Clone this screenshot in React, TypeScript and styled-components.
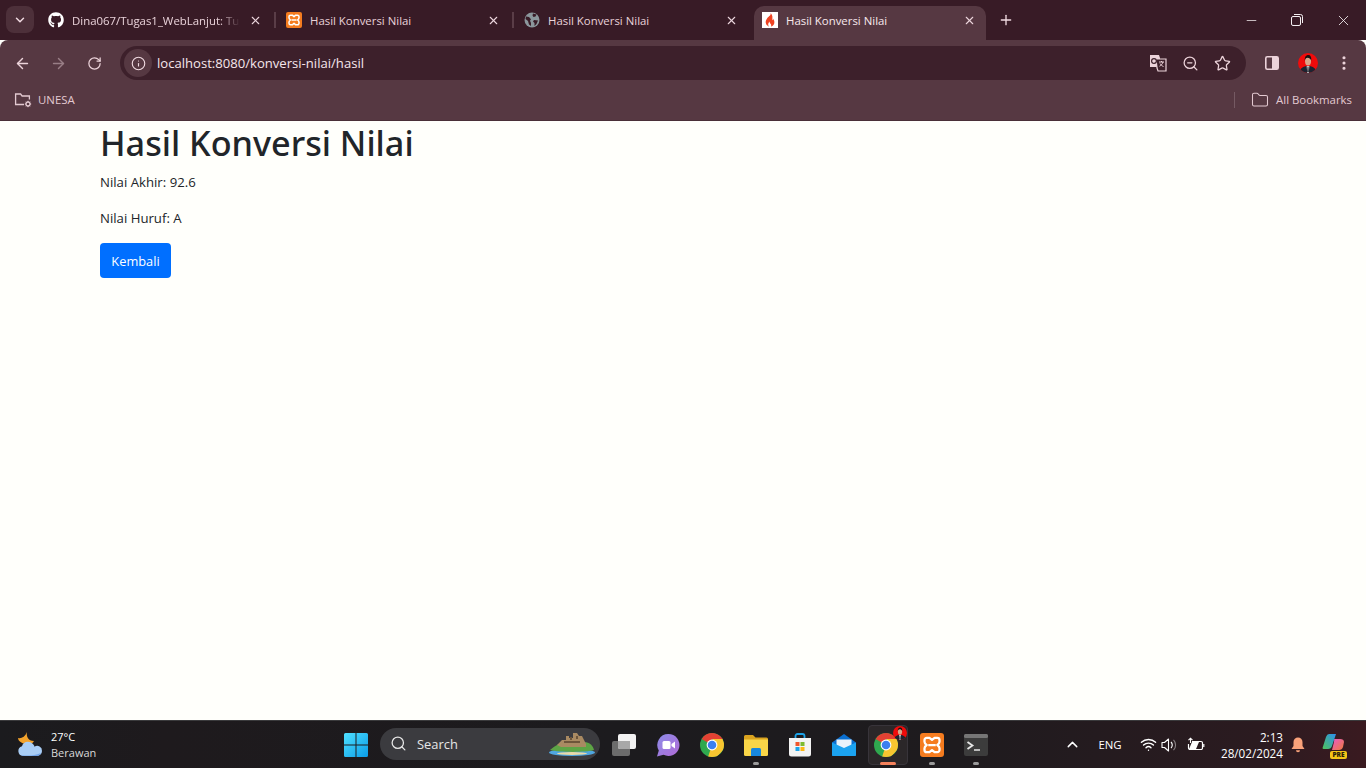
import React from "react";
import styled, { createGlobalStyle } from "styled-components";
import {
  ArrowLeft,
  ArrowRight,
  ChevronDown,
  ChevronUp,
  Folder,
  Info,
  Minus,
  MoreVertical,
  Plus,
  RotateCw,
  Search,
  Star,
  Wifi,
  X,
  ZoomOut,
} from "lucide-react";
import { FaGithub } from "react-icons/fa";

const UI_FONT = `"Open Sans", "Noto Sans", "Liberation Sans", sans-serif`;

const GlobalStyle = createGlobalStyle`
  html, body {
    margin: 0;
    padding: 0;
    height: 100%;
    overflow: hidden;
  }
  * {
    box-sizing: border-box;
  }
`;

const Screen = styled.div`
  display: flex;
  flex-direction: column;
  width: 1366px;
  height: 768px;
  overflow: hidden;
  font-family: ${UI_FONT};
  background: #fffffb;
`;

/* browser chrome */
const TabStrip = styled.div`
  display: flex;
  align-items: flex-start;
  height: 40px;
  padding-left: 6px;
  background: #381b26;
`;

const TabSearch = styled.button`
  display: flex;
  align-items: center;
  justify-content: center;
  width: 28px;
  height: 27px;
  margin: 6px 2px 0 0;
  padding: 0;
  color: #f1dbe2;
  background: #4d303a;
  border: 0;
  border-radius: 8px;
`;

const Tab = styled.div<{ $active?: boolean; $divider?: boolean }>`
  position: relative;
  display: flex;
  align-items: center;
  flex: none;
  width: ${({ $active }) => ($active ? "232px" : "238px")};
  height: 34px;
  margin: 6px ${({ $active }) => ($active ? "2px" : "0")} 0 ${({ $active }) => ($active ? "4px" : "0")};
  padding: 0 ${({ $active }) => ($active ? "8px" : "10px")} 6px ${({ $active }) => ($active ? "8px" : "12px")};
  color: ${({ $active }) => ($active ? "#f8e8ed" : "#e9d2d9")};
  background: ${({ $active }) => ($active ? "#563842" : "transparent")};
  border-radius: 10px 10px 0 0;

  &::after {
    content: "";
    display: ${({ $divider }) => ($divider ? "block" : "none")};
    position: absolute;
    top: 6px;
    right: -2px;
    width: 2px;
    height: 16px;
    background: #5a3d47;
  }
`;

const TabTitle = styled.span<{ $fade?: boolean }>`
  flex: 1;
  min-width: 0;
  margin-left: 8px;
  overflow: hidden;
  font-size: 11.4px;
  line-height: 15px;
  white-space: nowrap;
  mask-image: ${({ $fade }) =>
    $fade ? "linear-gradient(90deg, #000 88%, transparent 100%)" : "none"};
`;

const TabClose = styled.span`
  display: flex;
  flex: none;
  align-items: center;
  justify-content: center;
  width: 18px;
  margin-left: 6px;
  color: #ecd6dd;
`;

const NewTab = styled.span`
  display: flex;
  align-items: center;
  justify-content: center;
  width: 28px;
  height: 28px;
  margin: 6px 0 0 4px;
  color: #f1dbe2;
`;

const WindowControls = styled.div`
  display: flex;
  margin-left: auto;
  color: #f5f0f2;
`;

const WindowButton = styled.span`
  display: flex;
  align-items: center;
  justify-content: center;
  width: 46px;
  height: 40px;
`;

const Toolbar = styled.div`
  display: flex;
  align-items: center;
  height: 46px;
  padding-left: 4px;
  color: #ecd3da;
  background: #563842;
  border-radius: 8px 8px 0 0;
`;

const NavButton = styled.span<{ $dim?: boolean }>`
  display: flex;
  flex: none;
  align-items: center;
  justify-content: center;
  width: 36px;
  height: 34px;
  opacity: ${({ $dim }) => ($dim ? 0.45 : 1)};
`;

const Omnibox = styled.div`
  display: flex;
  align-items: center;
  width: 1126px;
  height: 34px;
  margin-left: 8px;
  padding: 0 8px 0 4px;
  background: #3d202b;
  border-radius: 17px;
`;

const SiteInfo = styled.span`
  display: flex;
  flex: none;
  align-items: center;
  justify-content: center;
  width: 28px;
  height: 28px;
  color: #f1dbe2;
  background: #563842;
  border-radius: 50%;
`;

const Url = styled.span`
  flex: 1;
  margin-left: 5px;
  color: #f6e6eb;
  font-size: 13.1px;
  line-height: 18px;
`;

const OmniAction = styled.span`
  display: flex;
  flex: none;
  align-items: center;
  justify-content: center;
  width: 32px;
`;

const ToolbarEnd = styled.div`
  display: flex;
  align-items: center;
  margin-left: 8px;
`;

const BookmarkBar = styled.div`
  display: flex;
  align-items: center;
  height: 35px;
  padding: 0 14px 7px 14px;
  color: #e3c9d1;
  background: #563842;
  border-bottom: 1px solid #4a2f38;
`;

const BookmarkLabel = styled.span`
  margin-left: 6px;
  font-size: 11.4px;
  line-height: 15px;
`;

const BookmarkDivider = styled.span`
  width: 1px;
  height: 16px;
  margin: 0 16px 0 auto;
  background: #755a63;
`;

const AllBookmarks = styled.span`
  display: flex;
  align-items: center;
  gap: 1px;
`;

/* page */
const Page = styled.main`
  flex: 1;
  padding: 0 100px;
  color: #212529;
  background: #fffffb;
`;

const Heading = styled.h1`
  margin: 0 0 7.2px;
  font-family: "Noto Sans", ${UI_FONT};
  font-size: 34.2px;
  font-weight: 500;
  line-height: 43.2px;
`;

const Line = styled.p`
  height: 21.6px;
  margin: 0 0 14.4px;
  padding-top: 1px;
  font-size: 13.2px;
  line-height: 21.6px;
`;

const BackButton = styled.a`
  display: inline-block;
  width: 71px;
  height: 35px;
  padding-top: 1px;
  color: #fff;
  font-size: 12.8px;
  line-height: 35px;
  text-align: center;
  background: #006fff;
  border-radius: 4px;
`;

/* taskbar */
const Taskbar = styled.footer`
  display: flex;
  align-items: center;
  height: 48px;
  color: #fff;
  background: linear-gradient(90deg, #1b1b1e 0%, #1e1a1d 12%, #1c1b1e 45%, #1e1b1e 70%, #2b1b20 92%, #3a1a20 100%);
  border-top: 1px solid #3a3a3c;
`;

const Weather = styled.div`
  display: flex;
  flex: none;
  align-items: center;
  width: 336px;
  padding-left: 16px;
`;

const WeatherText = styled.div`
  display: flex;
  flex-direction: column;
  margin-left: 5px;
  font-size: 11px;
  line-height: 16px;
`;

const Muted = styled.span`
  color: #d8d8d8;
`;

const StartButton = styled.span`
  display: flex;
  flex: none;
  align-items: center;
  justify-content: center;
  width: 40px;
`;

const SearchBox = styled.div`
  position: relative;
  display: flex;
  flex: none;
  align-items: center;
  width: 220px;
  height: 32px;
  margin: 0 2px 2px 4px;
  padding-left: 10px;
  color: #e6e6e6;
  background: #3b3b3f;
  border-radius: 16px;
`;

const SearchLabel = styled.span`
  margin-left: 10px;
  font-size: 12.9px;
`;

const Island = styled.span`
  position: absolute;
  top: 4px;
  right: 4px;
  display: flex;
`;

const TaskIcon = styled.span<{ $active?: boolean; $dot?: boolean }>`
  position: relative;
  display: flex;
  flex: none;
  align-items: center;
  justify-content: center;
  width: 44px;
  height: 40px;
  padding-right: ${({ $active }) => ($active ? "4px" : "0")};

  &::before {
    content: "";
    display: ${({ $active }) => ($active ? "block" : "none")};
    position: absolute;
    inset: 0 2px;
    background: #2b2729;
    border: 1px solid #38343a;
    border-radius: 4px;
  }

  &::after {
    content: "";
    display: ${({ $dot, $active }) => ($dot || $active ? "block" : "none")};
    position: absolute;
    bottom: 0;
    left: 50%;
    width: ${({ $active }) => ($active ? "16px" : "6px")};
    height: 3px;
    background: ${({ $active }) => ($active ? "#f5825c" : "#9b9b9b")};
    border-radius: 2px;
    transform: translateX(-50%);
  }

  svg {
    position: relative;
  }
`;

const ProfileBadge = styled.span`
  position: absolute;
  top: 1px;
  right: 3px;
  display: flex;
`;

const Tray = styled.div`
  display: flex;
  flex: 1;
  align-items: center;
  justify-content: flex-end;
  min-width: 0;
  padding-right: 9px;
`;

const TrayIcon = styled.span<{ $w: number }>`
  position: relative;
  display: flex;
  flex: none;
  align-items: center;
  justify-content: center;
  width: ${({ $w }) => $w}px;
`;

const TrayLang = styled.span`
  width: 54px;
  font-size: 11.4px;
  text-align: center;
`;

const Clock = styled.div`
  display: flex;
  flex-direction: column;
  align-items: flex-end;
  width: 72px;
  margin-right: 4px;
  font-size: 11.7px;
  line-height: 16px;
`;

const PreBadge = styled.span`
  position: absolute;
  top: 18px;
  left: 21px;
  width: 17px;
  height: 8px;
  color: #2a2208;
  font-size: 6.5px;
  font-weight: 800;
  line-height: 8px;
  text-align: center;
  background: #f5c518;
  border-radius: 2px;
`;

/* drawn icons */
const XamppIcon = ({ size = 16 }: { size?: number }) => (
  <svg width={size} height={size} viewBox="0 0 16 16">
    <rect width="16" height="16" rx="2" fill="#f57c1f" />
    <path
      d="M4.500 3.200h1.800L8 4.600l1.700-1.400h1.800a1.500 1.500 0 0 1 1.500 1.500v1.100q0 1.200-1.500 2.200 1.500 1 1.500 2.200v1.100a1.500 1.500 0 0 1-1.500 1.500H9.700L8 11.400l-1.700 1.400H4.500A1.500 1.500 0 0 1 3 11.300v-1.100Q3 9 4.500 8 3 7 3 5.800V4.700a1.500 1.500 0 0 1 1.500-1.500zM5.500 8h5"
      fill="none"
      stroke="#fff"
      strokeWidth="1.500"
      strokeLinejoin="round"
    />
  </svg>
);

const GlobeIcon = () => (
  <svg width="16" height="16" viewBox="0 0 16 16">
    <circle cx="8" cy="8" r="7.500" fill="#8b979c" />
    <path
      d="M2 4.500 5 5l2 2.200-1 1.500L7 11v3l-2-1.500L4 9 1.500 7zM9 1.500l3.500 1-1 2L9.500 5 8.500 3.500zM10 8l4 .5-1.500 3.500-2 2v-3L9 9.500z"
      fill="#381b26"
    />
  </svg>
);

const CodeIgniterIcon = () => (
  <svg width="16" height="16" viewBox="0 0 16 16">
    <rect width="16" height="16" fill="#fff" />
    <path
      d="M8.600 1c.7 2.200-2 3.400-3.400 5.200C3.800 8 3.200 10 4.100 12c.6 1.300 1.900 2.200 3 2.500-1.300-1.400-1.300-3 .4-5 .1 1.500.9 2 1.500 3 .4.700.2 1.500-.1 2 1.500-.3 3-1.600 3.400-3.300.4-1.900-.5-3.500-1.400-4.600 0 1-.4 1.600-1 1.900C10.800 6 10.800 3 8.600 1z"
      fill="#ee4323"
    />
  </svg>
);

const TranslateIcon = () => (
  <svg width="18" height="18" viewBox="0 0 18 18">
    <path d="M1 1h9l1 3v9H1z" fill="#ecd3da" />
    <path d="M7 5h10v12H9l-1-3z" fill="#3d202b" stroke="#ecd3da" strokeWidth="1.200" />
    <circle cx="5" cy="7" r="2.400" fill="none" stroke="#3d202b" strokeWidth="1.200" />
    <path d="M10 8h5M12.500 7v1M14 8c-.5 2-2 3.500-3.500 4.200M11 9.500c.7 1.300 2 2.500 3.500 3" fill="none" stroke="#ecd3da" strokeWidth="1" />
  </svg>
);

const SidePanelIcon = () => (
  <svg width="18" height="18" viewBox="0 0 18 18">
    <rect x="2.800" y="2.800" width="12.400" height="12.400" rx="1.500" fill="none" stroke="#ecd3da" strokeWidth="1.600" />
    <rect x="9" y="3" width="6" height="12" fill="#ecd3da" />
  </svg>
);

const Avatar = ({ id, size = 20 }: { id: string; size?: number }) => (
  <svg width={size} height={size} viewBox="0 0 20 20">
    <defs>
      <clipPath id={id}>
        <circle cx="10" cy="10" r="10" />
      </clipPath>
    </defs>
    <g clipPath={`url(#${id})`}>
      <rect width="20" height="20" fill="#f00b0b" />
      <path d="M2 20c0-5 3-7 8-7s8 2 8 7z" fill="#1d2330" />
      <path d="M8.700 13h2.600l-.5 7H9.200z" fill="#eef0f2" />
      <path d="M9.600 13.500h.8l.3 5-.7 1-.7-1z" fill="#0c0f16" />
      <ellipse cx="10" cy="8" rx="3" ry="4.600" fill="#d9a58a" />
      <path d="M6.800 8c-.4-4 1.200-6 3.400-6s3.500 2 3 5.800C12.500 5.500 11 4.800 9.600 4.800 8 4.800 7.200 6 6.800 8z" fill="#1a1210" />
    </g>
  </svg>
);

const FolderCogIcon = () => (
  <svg width="18" height="16" viewBox="0 0 18 16" fill="none" stroke="#e3c9d1" strokeWidth="1.300">
    <path d="M10 12.500H1.600V2h5l1.500 2h7.300v3.500" />
    <circle cx="14" cy="12" r="2" />
    <path d="M14 8.800v1.200M14 14v1.200M10.800 12H12M16 12h1.200M11.800 9.800l.8.800M15.400 13.400l.8.800M11.800 14.200l.8-.8M15.400 10.600l.8-.8" strokeWidth="1" />
  </svg>
);

const WindowsLogo = () => (
  <svg width="24" height="24" viewBox="0 0 24 24">
    <defs>
      <linearGradient id="win-grad" x1="0" y1="0" x2="1" y2="1">
        <stop offset="0" stopColor="#4fe0ff" />
        <stop offset="1" stopColor="#0a9ce8" />
      </linearGradient>
    </defs>
    <path d="M0 1.500Q0 0 1.500 0h10v11.500H0zM12.500 0h10Q24 0 24 1.500v10H12.500zM0 12.500h11.500V24h-10Q0 24 0 22.500zM12.500 12.500H24v10q0 1.500-1.500 1.500h-10z" fill="url(#win-grad)" />
  </svg>
);

const WeatherIcon = () => (
  <svg width="30" height="28" viewBox="0 0 30 28">
    <path d="M11 1c-1 4 1 9 7 9-1.500 3-5 4.500-9 3C4 11.500 2 9 2 7c3 1 7-1 9-6z" fill="#f2a22c" />
    <path d="M7 25a5 5 0 0 1-1-9.800C7 11 12 9.500 16 12.300c1.500 1 2.300 2.300 2.500 3.400A4.800 4.800 0 0 1 26 20a5 5 0 0 1-5 5z" fill="#a9cdf5" />
    <path d="M5 24c6 1 13 1 20-2-1 2-2.500 3-4 3H7z" fill="#6fa1e6" />
  </svg>
);

const IslandArt = () => (
  <svg width="48" height="24" viewBox="0 0 48 24">
    <ellipse cx="24" cy="20.500" rx="23" ry="3.500" fill="#4fa6e0" />
    <ellipse cx="24" cy="21.500" rx="15" ry="1.500" fill="#e9d9a8" />
    <path d="M2 18C7 14 12 10 20 10h16c6 0 9 4 10 8-8 2.500-34 2.500-44 0z" fill="#5da445" />
    <path d="M9 13l5-5h4V4h3v2h4V1h4l2 3h3l4 8v3H13z" fill="#a98a62" />
    <path d="M16 9h16v2H16zM22 5h2v3h-2zM28 4h2v3h-2z" fill="#6d553a" />
  </svg>
);

const CopyWindowIcon = () => (
  <svg width="12" height="12" viewBox="0 0 12 12" fill="none" stroke="currentColor" strokeWidth="1">
    <rect x=".5" y="2.500" width="9" height="9" rx="1.500" />
    <path d="M3 .5h6.500a2 2 0 0 1 2 2V9" />
  </svg>
);

const TaskViewIcon = () => (
  <svg width="24" height="22" viewBox="0 0 24 22">
    <rect x="0" y="7" width="18" height="15" rx="2" fill="#6c6c6c" />
    <rect x="6" y="0" width="18" height="15" rx="2" fill="#f2f2f2" />
    <path d="M6 7h12v8H8a2 2 0 0 1-2-2z" fill="#a8a8a8" />
  </svg>
);

const MeetIcon = () => (
  <svg width="24" height="24" viewBox="0 0 24 24">
    <defs>
      <linearGradient id="meet-grad" x1="0" y1="0" x2="1" y2="1">
        <stop offset="0" stopColor="#8c8ce8" />
        <stop offset="1" stopColor="#b06ad6" />
      </linearGradient>
    </defs>
    <path d="M12.500 1a11 11 0 1 1-5 20.800L1 23.500l1.800-6A11 11 0 0 1 12.500 1z" fill="url(#meet-grad)" />
    <rect x="6.500" y="8" width="8" height="8" rx="1.500" fill="#fff" />
    <path d="M15.500 11l3.500-2.500v7L15.500 13z" fill="#fff" />
  </svg>
);

const ChromeIcon = ({ id, size = 24 }: { id: string; size?: number }) => (
  <svg width={size} height={size} viewBox="0 0 24 24">
    <defs>
      <clipPath id={id}>
        <circle cx="12" cy="12" r="12" />
      </clipPath>
    </defs>
    <g clipPath={`url(#${id})`}>
      <rect width="24" height="24" fill="#2fa84f" />
      <path d="M12 12 1.600 6 7 -2h17v8H12z" fill="#e34133" />
      <path d="M12 6h12v10l-8 9-8-1 4-12 4.500-2.500z" fill="#f8c530" />
    </g>
    <circle cx="12" cy="12" r="5.400" fill="#fff" />
    <circle cx="12" cy="12" r="4.300" fill="#3b7ff0" />
  </svg>
);

const ExplorerIcon = () => (
  <svg width="24" height="24" viewBox="0 0 24 24">
    <path d="M0 3.500Q0 2 1.500 2H9l2.500 2.500h11Q24 4.500 24 6v2H0z" fill="#d9a31f" />
    <path d="M0 6.500h24v15q0 1.500-1.500 1.500h-21Q0 23 0 21.500z" fill="#f9d648" />
    <path d="M7 16.500Q7 15 8.500 15h7q1.500 0 1.500 1.500V23H7z" fill="#1787dc" />
  </svg>
);

const StoreIcon = () => (
  <svg width="24" height="24" viewBox="0 0 24 24">
    <path d="M7.500 5V3a2 2 0 0 1 2-2h5a2 2 0 0 1 2 2v2" fill="none" stroke="#1ca3e8" strokeWidth="1.800" />
    <path d="M1 5h22v16a2.500 2.500 0 0 1-2.500 2.500h-17A2.500 2.500 0 0 1 1 21z" fill="#f3f3f3" />
    <rect x="7.500" y="9" width="4" height="4" fill="#f0562b" />
    <rect x="12.500" y="9" width="4" height="4" fill="#7dba2f" />
    <rect x="7.500" y="14" width="4" height="4" fill="#1ba3e8" />
    <rect x="12.500" y="14" width="4" height="4" fill="#fdb813" />
  </svg>
);

const MailIcon = () => (
  <svg width="24" height="22" viewBox="0 0 24 22">
    <path d="M12 0 24 8.500V21a1 1 0 0 1-1 1H1a1 1 0 0 1-1-1V8.500z" fill="#0a6fd0" />
    <path d="M4.500 5.500h15v6.500L12 17l-7.500-5z" fill="#e8f3fb" />
    <path d="M0 8.500 12 14 24 8.500V21a1 1 0 0 1-1 1H1a1 1 0 0 1-1-1z" fill="#1ba3f0" />
  </svg>
);

const TerminalIcon = () => (
  <svg width="24" height="22" viewBox="0 0 24 22">
    <rect width="24" height="22" rx="2" fill="#3c3c3c" />
    <rect width="24" height="4" rx="1.500" fill="#767676" />
    <path d="M3.500 8 8.500 11.500 3.500 15" fill="none" stroke="#e6e6e6" strokeWidth="1.800" />
    <path d="M10 16h6" stroke="#e6e6e6" strokeWidth="1.500" />
  </svg>
);

const VolumeIcon = () => (
  <svg width="18" height="16" viewBox="0 0 18 16" fill="none" stroke="#fff" strokeWidth="1.100">
    <path d="M1 5.500h2.500L7.500 2v12l-4-3.500H1z" strokeLinejoin="round" />
    <path d="M10 5a4.200 4.200 0 0 1 0 6" />
    <path d="M12.500 2.800a7.500 7.500 0 0 1 0 10.400" opacity=".45" />
  </svg>
);

const BatteryIcon = () => (
  <svg width="18" height="15" viewBox="0 0 18 15" fill="none" stroke="#fff" strokeWidth="1.200">
    <path d="M5 4.500h9a1.500 1.500 0 0 1 1.500 1.500v5a1.500 1.500 0 0 1-1.500 1.500H3A1.500 1.500 0 0 1 1.500 11V7" />
    <path d="M16.800 7v3" />
    <path d="M2 12h7l3-7H5z" fill="#fff" stroke="none" />
    <path d="M3.500 6V1.200M1.500 3.200l2-2 2 2" strokeWidth="1.100" />
  </svg>
);

const BellIcon = () => (
  <svg width="14" height="16" viewBox="0 0 14 16">
    <path d="M7 .5a4.500 4.500 0 0 1 4.500 4.500v4l2 3H.5l2-3V5A4.500 4.500 0 0 1 7 .5z" fill="#f9a27a" />
    <path d="M5 13.300h4a2 2 0 0 1-4 0z" fill="#f9a27a" />
  </svg>
);

const CopilotIcon = () => (
  <svg width="24" height="24" viewBox="0 0 24 24">
    <defs>
      <linearGradient id="cop-a" x1="0" y1="1" x2="1" y2="0">
        <stop offset="0" stopColor="#4fc35a" />
        <stop offset="1" stopColor="#2b8ff0" />
      </linearGradient>
      <linearGradient id="cop-b" x1="0" y1="0" x2="1" y2="1">
        <stop offset="0" stopColor="#e85ac8" />
        <stop offset="1" stopColor="#f07a3a" />
      </linearGradient>
    </defs>
    <path d="M8 1h7l-4 12q-1 3-4 3H2.500Q1 16 2 13.500L5 4q1-3 3-3z" fill="url(#cop-a)" />
    <path d="M13 6h6q4 0 4 3l-1 5q-1 3-4 3h-7l2-8q.5-3 0-3z" fill="url(#cop-b)" />
  </svg>
);

const App: React.FC = () => (
  <Screen>
    <GlobalStyle />
    <TabStrip>
      <TabSearch>
        <ChevronDown size={14} strokeWidth={2.5} />
      </TabSearch>
      <Tab $divider>
        <FaGithub size={16} color="#fff" />
        <TabTitle $fade>Dina067/Tugas1_WebLanjut: Tugas</TabTitle>
        <TabClose>
          <X size={13} strokeWidth={2} />
        </TabClose>
      </Tab>
      <Tab $divider>
        <XamppIcon />
        <TabTitle>Hasil Konversi Nilai</TabTitle>
        <TabClose>
          <X size={13} strokeWidth={2} />
        </TabClose>
      </Tab>
      <Tab>
        <GlobeIcon />
        <TabTitle>Hasil Konversi Nilai</TabTitle>
        <TabClose>
          <X size={13} strokeWidth={2} />
        </TabClose>
      </Tab>
      <Tab $active>
        <CodeIgniterIcon />
        <TabTitle>Hasil Konversi Nilai</TabTitle>
        <TabClose>
          <X size={13} strokeWidth={2} />
        </TabClose>
      </Tab>
      <NewTab>
        <Plus size={16} strokeWidth={2} />
      </NewTab>
      <WindowControls>
        <WindowButton>
          <Minus size={15} strokeWidth={1.2} />
        </WindowButton>
        <WindowButton>
          <CopyWindowIcon />
        </WindowButton>
        <WindowButton>
          <X size={17} strokeWidth={1.2} />
        </WindowButton>
      </WindowControls>
    </TabStrip>

    <Toolbar>
      <NavButton>
        <ArrowLeft size={17} strokeWidth={2} />
      </NavButton>
      <NavButton $dim>
        <ArrowRight size={17} strokeWidth={2} />
      </NavButton>
      <NavButton>
        <RotateCw size={15} strokeWidth={2} />
      </NavButton>
      <Omnibox>
        <SiteInfo>
          <Info size={15} strokeWidth={1.8} />
        </SiteInfo>
        <Url>localhost:8080/konversi-nilai/hasil</Url>
        <OmniAction>
          <TranslateIcon />
        </OmniAction>
        <OmniAction>
          <ZoomOut size={17} strokeWidth={1.8} />
        </OmniAction>
        <OmniAction>
          <Star size={17} strokeWidth={1.8} />
        </OmniAction>
      </Omnibox>
      <ToolbarEnd>
        <NavButton>
          <SidePanelIcon />
        </NavButton>
        <NavButton>
          <Avatar id="avatar-toolbar" />
        </NavButton>
        <NavButton>
          <MoreVertical size={18} strokeWidth={2.2} />
        </NavButton>
      </ToolbarEnd>
    </Toolbar>

    <BookmarkBar>
      <FolderCogIcon />
      <BookmarkLabel>UNESA</BookmarkLabel>
      <BookmarkDivider />
      <AllBookmarks>
        <Folder size={18} strokeWidth={1.4} />
        <BookmarkLabel>All Bookmarks</BookmarkLabel>
      </AllBookmarks>
    </BookmarkBar>

    <Page>
      <Heading>Hasil Konversi Nilai</Heading>
      <Line>Nilai Akhir: 92.6</Line>
      <Line>Nilai Huruf: A</Line>
      <BackButton>Kembali</BackButton>
    </Page>

    <Taskbar>
      <Weather>
        <WeatherIcon />
        <WeatherText>
          <span>27°C</span>
          <Muted>Berawan</Muted>
        </WeatherText>
      </Weather>
      <StartButton>
        <WindowsLogo />
      </StartButton>
      <SearchBox>
        <Search size={17} strokeWidth={1.8} />
        <SearchLabel>Search</SearchLabel>
        <Island>
          <IslandArt />
        </Island>
      </SearchBox>
      <TaskIcon>
        <TaskViewIcon />
      </TaskIcon>
      <TaskIcon>
        <MeetIcon />
      </TaskIcon>
      <TaskIcon>
        <ChromeIcon id="chrome-a" />
      </TaskIcon>
      <TaskIcon $dot>
        <ExplorerIcon />
      </TaskIcon>
      <TaskIcon>
        <StoreIcon />
      </TaskIcon>
      <TaskIcon>
        <MailIcon />
      </TaskIcon>
      <TaskIcon $active>
        <ChromeIcon id="chrome-b" />
        <ProfileBadge>
          <Avatar id="avatar-badge" size={14} />
        </ProfileBadge>
      </TaskIcon>
      <TaskIcon $dot>
        <XamppIcon size={24} />
      </TaskIcon>
      <TaskIcon $dot>
        <TerminalIcon />
      </TaskIcon>
      <Tray>
        <TrayIcon $w={22}>
          <ChevronUp size={17} strokeWidth={2} />
        </TrayIcon>
        <TrayLang>ENG</TrayLang>
        <TrayIcon $w={22}>
          <Wifi size={17} strokeWidth={2} />
        </TrayIcon>
        <TrayIcon $w={22}>
          <VolumeIcon />
        </TrayIcon>
        <TrayIcon $w={30}>
          <BatteryIcon />
        </TrayIcon>
        <Clock>
          <span>2:13</span>
          <span>28/02/2024</span>
        </Clock>
        <TrayIcon $w={22}>
          <BellIcon />
        </TrayIcon>
        <TrayIcon $w={48}>
          <CopilotIcon />
          <PreBadge>PRE</PreBadge>
        </TrayIcon>
      </Tray>
    </Taskbar>
  </Screen>
);

export default App;
